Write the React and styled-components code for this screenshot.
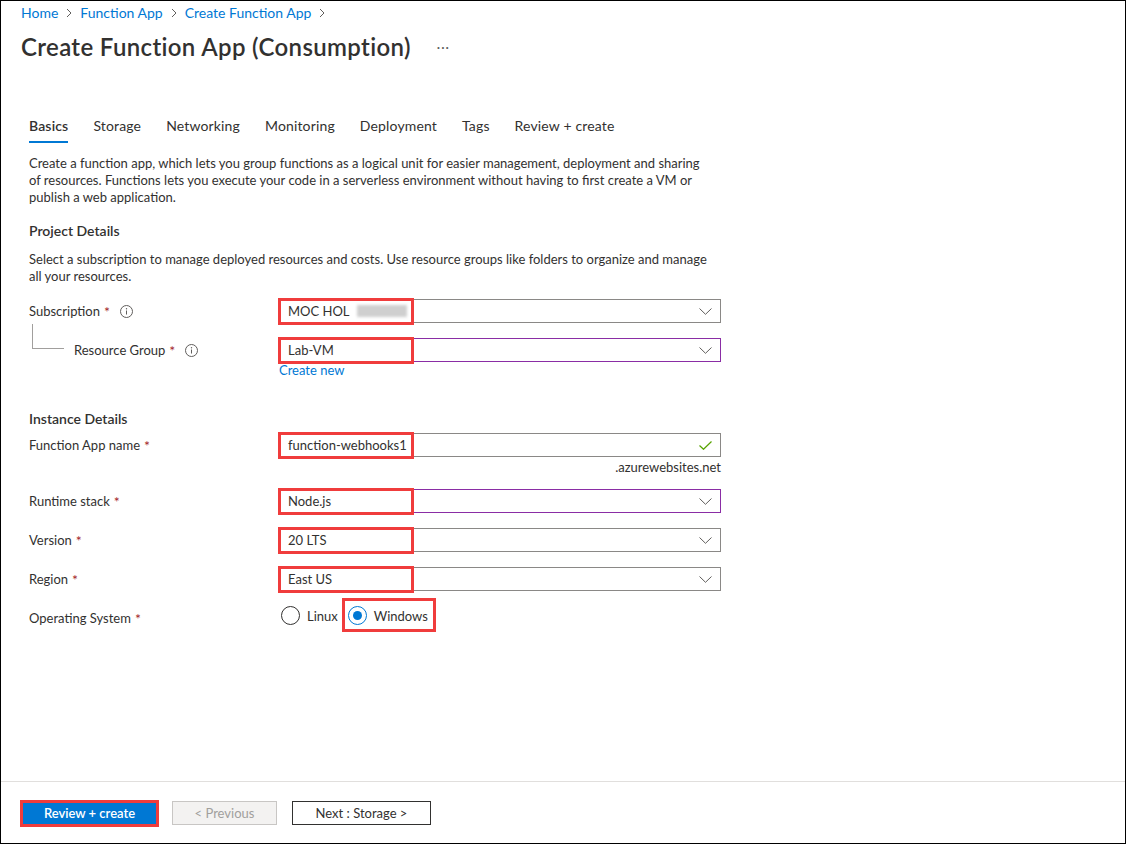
import React from "react";
import styled, { createGlobalStyle } from "styled-components";

const FONT = `"Segoe UI", Lato, "Liberation Sans", sans-serif`;

const GlobalStyle = createGlobalStyle`
  body {
    margin: 0;
    background: #fff;
    font-family: ${FONT};
    color: #323130;
  }
`;

const Frame = styled.div`
  width: 1126px;
  height: 844px;
  box-sizing: border-box;
  border: 1px solid #000;
  display: flex;
  flex-direction: column;
  overflow: hidden;
`;

const Top = styled.header`
  padding: 2px 0 0 20px;
`;

const Crumbs = styled.nav`
  display: flex;
  align-items: center;
  gap: 8px;
  font-size: 14px;
  line-height: 20px;
  color: #0078d4;
`;

const TitleRow = styled.div`
  display: flex;
  align-items: center;
  margin-top: 8px;
`;

const H1 = styled.h1`
  margin: 0;
  font-size: 24px;
  line-height: 32px;
  font-weight: 600;
  letter-spacing: 0.35px;
  color: #323130;
`;

const More = styled.span`
  margin-left: 26px;
  color: #605e5c;
  font-size: 13px;
  letter-spacing: 1px;
`;

const Main = styled.main`
  flex: 1;
  padding-left: 28px;
`;

const Tabs = styled.div`
  display: flex;
  gap: 25px;
  margin-top: 53px;
`;

const Tab = styled.div`
  font-size: 14px;
  line-height: 20px;
  padding-bottom: 5px;
  letter-spacing: 0.15px;
  font-weight: ${(p) => (p.$active ? 600 : 400)};
  border-bottom: 2px solid ${(p) => (p.$active ? "#0078d4" : "transparent")};
  color: #323130;
`;

const Text = styled.p`
  margin: ${(p) => p.$mt || 0}px 0 0;
  font-size: 13px;
  line-height: 17px;
  color: #323130;
`;

const Heading = styled.h2`
  margin: ${(p) => p.$mt}px 0 0;
  font-size: 14px;
  line-height: 20px;
  font-weight: 600;
  color: #323130;
`;

const Row = styled.div`
  display: grid;
  grid-template-columns: 250px 442px;
  align-items: start;
  margin-top: ${(p) => p.$mt}px;
`;

const Label = styled.div`
  display: flex;
  align-items: center;
  height: ${(p) => p.$h || 24}px;
  font-size: 13px;
  color: #323130;
  padding-top: ${(p) => p.$pt || 0}px;
`;

const Tree = styled.span`
  align-self: flex-start;
  margin: -14px 10px 0 3px;
  width: 32px;
  height: 25px;
  border-left: 1px solid #a19f9d;
  border-bottom: 1px solid #a19f9d;
  box-sizing: border-box;
`;

const Req = styled.span`
  color: #a4262c;
  margin-left: 4px;
  font-size: 14px;
`;

const InfoWrap = styled.span`
  display: inline-flex;
  margin-left: 10px;
`;

const Field = styled.div`
  display: flex;
  flex-direction: column;
`;

const Select = styled.div`
  position: relative;
  height: 24px;
  box-sizing: border-box;
  border: 1px solid ${(p) => (p.$focus ? "#8a2da5" : "#8a8886")};
  display: flex;
  align-items: center;
  justify-content: space-between;
  padding: 0 8px;
  font-size: 13px;
  color: #323130;
`;

const Value = styled.span`
  display: flex;
  align-items: center;
`;

const Blur = styled.span`
  display: inline-block;
  width: 50px;
  height: 12px;
  margin-left: 7px;
  background: #cfcfcf;
  filter: blur(1.5px);
`;

const Highlight = styled.span`
  position: absolute;
  left: ${(p) => p.$x ?? -2}px;
  top: ${(p) => p.$y ?? -2}px;
  width: ${(p) => p.$w ?? 136}px;
  height: ${(p) => p.$h ?? 27}px;
  border: 3px solid #f03c3c;
  box-sizing: border-box;
  pointer-events: none;
`;

const Link = styled.a`
  font-size: 13px;
  line-height: 17px;
  color: #0078d4;
  text-decoration: none;
`;

const Suffix = styled.div`
  margin-top: 2px;
  text-align: right;
  font-size: 13px;
  line-height: 17px;
  color: #323130;
`;

const Radios = styled.div`
  display: flex;
  align-items: center;
  gap: 10px;
  padding-left: 2px;
`;

const Option = styled.label`
  position: relative;
  display: flex;
  align-items: center;
  gap: 7px;
  font-size: 13px;
  color: #323130;
`;

const Circle = styled.span`
  width: 19px;
  height: 19px;
  box-sizing: border-box;
  border-radius: 50%;
  border: 1px solid ${(p) => (p.$on ? "#0078d4" : "#323130")};
  display: flex;
  align-items: center;
  justify-content: center;
  &::after {
    content: "";
    display: ${(p) => (p.$on ? "block" : "none")};
    width: 9px;
    height: 9px;
    border-radius: 50%;
    background: #0078d4;
  }
`;

const Footer = styled.footer`
  border-top: 1px solid #e1dfdd;
  height: 62px;
  box-sizing: border-box;
  padding: 19px 0 0 21px;
  display: flex;
  align-items: flex-start;
  gap: 15px;
`;

const Button = styled.button`
  position: relative;
  width: ${(p) => p.$w}px;
  height: 24px;
  padding: 0;
  font-family: ${FONT};
  font-size: 13px;
  font-weight: ${(p) => (p.$primary ? 600 : 400)};
  border: 1px solid
    ${(p) => (p.$primary ? "#0078d4" : p.$disabled ? "#c8c6c4" : "#323130")};
  background: ${(p) => (p.$primary ? "#0078d4" : p.$disabled ? "#f3f2f1" : "#fff")};
  color: ${(p) => (p.$primary ? "#fff" : p.$disabled ? "#a19f9d" : "#323130")};
`;

const Chevron = () => (
  <svg width="13" height="7" viewBox="0 0 13 7">
    <polyline points="0.5,0.5 6.5,6.3 12.5,0.5" fill="none" stroke="#605e5c" strokeWidth="1" />
  </svg>
);

const CrumbSep = () => (
  <svg width="6" height="10" viewBox="0 0 6 10">
    <polyline points="1,1 5,5 1,9" fill="none" stroke="#605e5c" strokeWidth="1" />
  </svg>
);

const Info = () => (
  <svg width="13" height="13" viewBox="0 0 13 13">
    <circle cx="6.5" cy="6.5" r="6" fill="none" stroke="#605e5c" strokeWidth="1" />
    <rect x="6" y="5.5" width="1" height="4" fill="#605e5c" />
    <circle cx="6.5" cy="3.8" r="0.7" fill="#605e5c" />
  </svg>
);

const Tick = () => (
  <svg width="13" height="9" viewBox="0 0 13 9">
    <polyline points="0.5,4.5 4.5,8.3 12.5,0.5" fill="none" stroke="#57a300" strokeWidth="1.2" />
  </svg>
);

const Dropdown = ({ value, focus, blur }) => (
  <Select $focus={focus}>
    <Value>
      {value}
      {blur && <Blur />}
    </Value>
    <Chevron />
    <Highlight />
  </Select>
);

const FieldLabel = ({ children, info, indent }) => (
  <Label>
    {indent && <Tree />}
    {children}
    <Req>*</Req>
    {info && (
      <InfoWrap>
        <Info />
      </InfoWrap>
    )}
  </Label>
);

const tabs = ["Basics", "Storage", "Networking", "Monitoring", "Deployment", "Tags", "Review + create"];

export default function App() {
  return (
    <>
      <GlobalStyle />
      <Frame>
        <Top>
          <Crumbs>
            <span>Home</span>
            <CrumbSep />
            <span>Function App</span>
            <CrumbSep />
            <span>Create Function App</span>
            <CrumbSep />
          </Crumbs>
          <TitleRow>
            <H1>Create Function App (Consumption)</H1>
            <More>···</More>
          </TitleRow>
        </Top>

        <Main>
          <Tabs>
            {tabs.map((t, i) => (
              <Tab key={t} $active={i === 0}>
                {t}
              </Tab>
            ))}
          </Tabs>

          <Text $mt={12}>
            Create a function app, which lets you group functions as a logical unit for easier management, deployment and sharing
            <br />
            of resources. Functions lets you execute your code in a serverless environment without having to first create a VM or
            <br />
            publish a web application.
          </Text>

          <Heading $mt={15}>Project Details</Heading>
          <Text $mt={10}>
            Select a subscription to manage deployed resources and costs. Use resource groups like folders to organize and manage
            <br />
            all your resources.
          </Text>

          <Row $mt={14}>
            <FieldLabel info>Subscription</FieldLabel>
            <Dropdown value="MOC HOL" blur />
          </Row>

          <Row $mt={15}>
            <FieldLabel info indent>
              Resource Group
            </FieldLabel>
            <Field>
              <Dropdown value="Lab-VM" focus />
              <Link href="#">Create new</Link>
            </Field>
          </Row>

          <Heading $mt={30}>Instance Details</Heading>

          <Row $mt={4}>
            <FieldLabel>Function App name</FieldLabel>
            <Field>
              <Select>
                <Value>function-webhooks1</Value>
                <Tick />
                <Highlight />
              </Select>
              <Suffix>.azurewebsites.net</Suffix>
            </Field>
          </Row>

          <Row $mt={13}>
            <FieldLabel>Runtime stack</FieldLabel>
            <Dropdown value="Node.js" focus />
          </Row>

          <Row $mt={15}>
            <FieldLabel>Version</FieldLabel>
            <Dropdown value="20 LTS" />
          </Row>

          <Row $mt={15}>
            <FieldLabel>Region</FieldLabel>
            <Dropdown value="East US" />
          </Row>

          <Row $mt={15}>
            <Label $h={22} $pt={1}>
              Operating System<Req>*</Req>
            </Label>
            <Radios>
              <Option>
                <Circle />
                Linux
              </Option>
              <Option>
                <Circle $on />
                Windows
                <Highlight $x={-6} $y={-8} $w={94} $h={34} />
              </Option>
            </Radios>
          </Row>
        </Main>

        <Footer>
          <Button $primary $w={135}>
            Review + create
            <Highlight $x={-3} $y={-2} $w={139} $h={27} />
          </Button>
          <Button $disabled $w={105}>
            &lt; Previous
          </Button>
          <Button $w={139}>Next : Storage &gt;</Button>
        </Footer>
      </Frame>
    </>
  );
}
